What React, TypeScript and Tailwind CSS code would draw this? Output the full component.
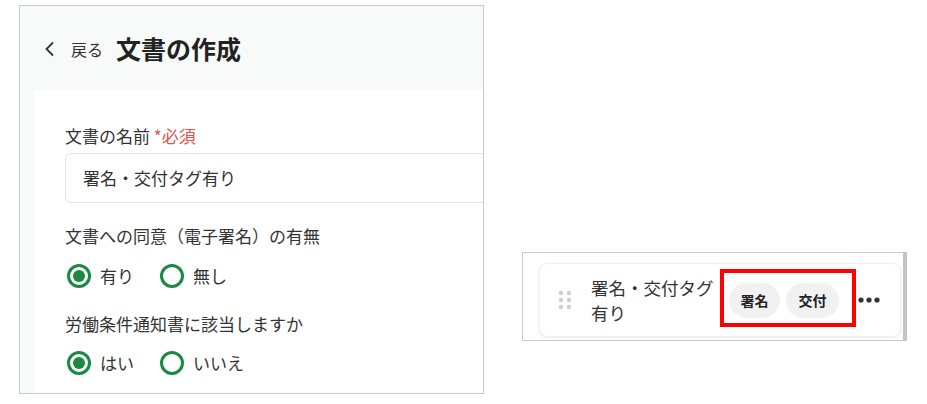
import React from "react";

const font = { fontFamily: '"Noto Sans CJK JP", "Noto Sans", sans-serif' };

function Radio({ label, checked }: { label: string; checked?: boolean }) {
  return (
    <label className="flex items-center gap-[9px]">
      <span className="flex h-[24px] w-[24px] items-center justify-center rounded-full border-[3px] border-[#1a8a42]">
        {checked && <span className="h-[12px] w-[12px] rounded-full bg-[#1a8a42]"></span>}
      </span>
      <span className="text-[17px] leading-[24px] text-[#333]">{label}</span>
    </label>
  );
}

function DocumentForm() {
  return (
    <div className="flex h-[389px] w-[465px] flex-col overflow-hidden border border-[#c9c9c9] bg-[#f8f9f9]">
      <div className="flex h-[84px] shrink-0 items-center pl-[24px] pt-[2px]">
        <svg width="12" height="16" viewBox="0 0 12 16" className="mr-[15px]">
          <path d="M9 1.5 L2.5 8 L9 14.5" fill="none" stroke="#333" strokeWidth="1.8" />
        </svg>
        <span className="text-[16px] text-[#333]">戻る</span>
        <h1 className="ml-[13px] text-[25px] font-bold text-[#222]">文書の作成</h1>
      </div>
      <div className="ml-[14px] flex-1 bg-white pl-[31px] pt-[34px]">
        <p className="text-[17px] leading-[24px] text-[#333]">
          文書の名前 <span className="text-[#e5534b]">*必須</span>
        </p>
        <div className="mt-[5px] flex h-[50px] w-[460px] items-center rounded-[6px] border border-[#e3e3e3] pl-[17px]">
          <span className="text-[17px] text-[#333]">署名・交付タグ有り</span>
        </div>
        <p className="mt-[21px] text-[17px] leading-[24px] text-[#333]">
          文書への同意（電子署名）の有無
        </p>
        <div className="ml-[2px] mt-[16px] flex gap-[26px]">
          <Radio label="有り" checked />
          <Radio label="無し" />
        </div>
        <p className="mt-[24px] text-[17px] leading-[24px] text-[#333]">
          労働条件通知書に該当しますか
        </p>
        <div className="ml-[2px] mt-[15px] flex gap-[26px]">
          <Radio label="はい" checked />
          <Radio label="いいえ" />
        </div>
      </div>
    </div>
  );
}

function DocumentRow() {
  return (
    <div className="flex h-[89px] w-[385px] border border-r-[4px] border-[#cacaca] border-r-[#c4c4c4] bg-white pl-[16px] pr-[2px] pt-[10px]">
      <div className="flex h-[74px] w-full items-center rounded-[8px] border border-[#eeeeee] shadow-[0_1px_3px_rgba(0,0,0,0.08)]">
        <svg width="14" height="20" viewBox="0 0 14 20" className="ml-[18px] mr-[19px]">
          {[3, 10, 17].map((y) => (
            <g key={y}>
              <circle cx="3" cy={y} r="2.2" fill="#cfcfcf" />
              <circle cx="11" cy={y} r="2.2" fill="#cfcfcf" />
            </g>
          ))}
        </svg>
        <p className="w-[137px] text-[17.5px] leading-[25px] text-[#333]">
          署名・交付タグ
          <br />
          有り
        </p>
        <div className="relative flex gap-[6px] pl-[1px]">
          <span className="flex h-[35px] w-[51px] items-center justify-center rounded-full bg-[#f1f1f1] text-[14px] font-bold text-[#222]">
            署名
          </span>
          <span className="flex h-[35px] w-[53px] items-center justify-center rounded-full bg-[#f1f1f1] text-[14px] font-bold text-[#222]">
            交付
          </span>
          <div className="absolute -left-[8px] -right-[17px] -top-[14px] -bottom-[9px] border-[4px] border-[#ff0000]"></div>
        </div>
        <svg width="22" height="6" viewBox="0 0 22 6" className="ml-[19px]">
          <circle cx="3" cy="3" r="2.6" fill="#333" />
          <circle cx="11" cy="3" r="2.6" fill="#333" />
          <circle cx="19" cy="3" r="2.6" fill="#333" />
        </svg>
      </div>
    </div>
  );
}

export default function App() {
  return (
    <div className="flex h-[404px] w-[927px] items-start bg-white" style={font}>
      <div className="ml-[19px] mt-[5px]">
        <DocumentForm />
      </div>
      <div className="ml-[38px] mt-[252px]">
        <DocumentRow />
      </div>
    </div>
  );
}
